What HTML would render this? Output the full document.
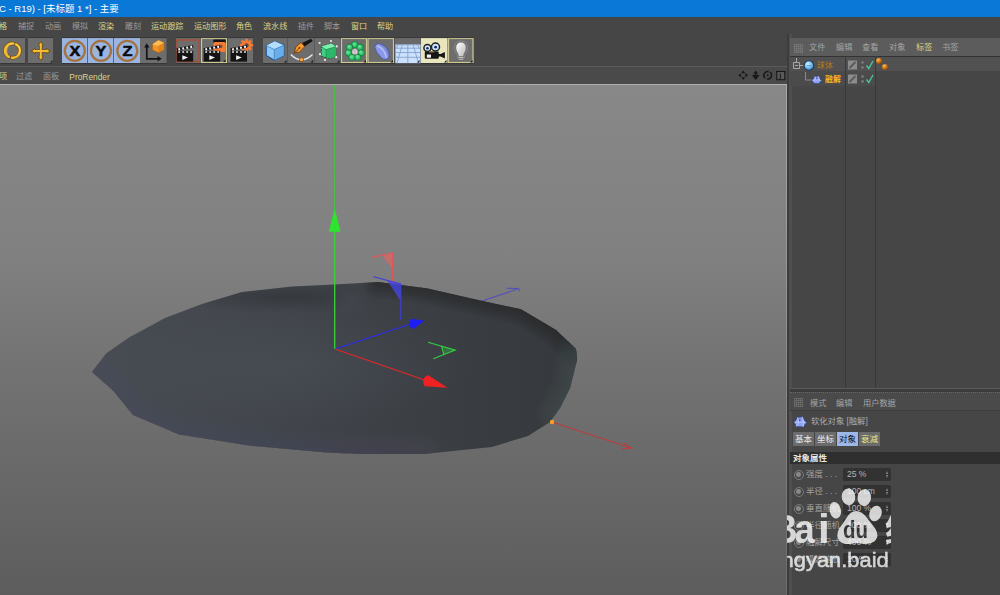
<!DOCTYPE html>
<html lang="zh">
<head>
<meta charset="utf-8">
<title>C4D</title>
<style>
html,body{margin:0;padding:0;}
body{width:1000px;height:595px;overflow:hidden;background:#464646;position:relative;font-family:"Liberation Sans","Noto Sans CJK SC",sans-serif;}
.abs{position:absolute;}
.t{position:absolute;white-space:nowrap;line-height:1;}
#title{left:0;top:0;width:1000px;height:17px;background:#0a78d6;}
#title .t{left:-1px;top:4px;font-size:9.5px;color:#fff;}
.m{font-size:8.1px;top:22.9px;color:#9a9a9a;}
.btn{position:absolute;top:38px;height:25px;background:#6c6c6c;}
.bb{background:#9bb5e2;}
.by{box-shadow:inset 0 0 0 1px #c9c58a;}
#vp{left:0;top:84px;width:787px;height:511px;overflow:hidden;border-top:1px solid #b0b0b0;box-sizing:border-box;}
.vm{font-size:8.1px;top:73.4px;color:#9a9a9a;}

.om{font-size:8.2px;top:44.2px;color:#a4a4a4;}
.am{font-size:8.2px;top:399.5px;color:#a4a4a4;}
.tab{position:absolute;top:432px;height:14px;background:#6b6b6b;font-size:8.5px;color:#ececec;text-align:center;line-height:14px;}
.lbl{font-size:8.5px;color:#a2a2a2;left:806px;}
.inp{position:absolute;left:843px;width:48px;height:12.6px;background:#323232;border-radius:1.5px;}
.inp span{position:absolute;left:4px;top:2.3px;font-size:8.5px;color:#b4b4b4;line-height:1;white-space:nowrap;}
.inp i{position:absolute;left:43.3px;top:2.8px;width:0;height:0;border-left:1.7px solid transparent;border-right:1.7px solid transparent;border-bottom:3px solid #8c8c8c;}
.inp i:after{content:"";position:absolute;left:-1.7px;top:3.6px;width:0;height:0;border-left:1.7px solid transparent;border-right:1.7px solid transparent;border-top:3px solid #8c8c8c;}
.radio{position:absolute;left:793.5px;width:10px;height:10px;border-radius:50%;border:1px solid #7c7c7c;box-sizing:border-box;}
.radio:after{content:"";position:absolute;left:1.7px;top:1.7px;width:4.6px;height:4.6px;border-radius:50%;background:#888;}
.y{color:#d8d48a;}
</style>
</head>
<body>
<!-- title bar -->
<div id="title" class="abs"><span class="t">C - R19) - [未标题 1 *] - 主要</span></div>

<!-- main menu -->
<span class="t m y" style="left:-1px">格</span>
<span class="t m" style="left:18px">捕捉</span>
<span class="t m" style="left:45px">动画</span>
<span class="t m" style="left:72px">模拟</span>
<span class="t m y" style="left:98px">渲染</span>
<span class="t m" style="left:125px">雕刻</span>
<span class="t m y" style="left:151px">运动跟踪</span>
<span class="t m y" style="left:194px">运动图形</span>
<span class="t m y" style="left:236px">角色</span>
<span class="t m y" style="left:263px">流水线</span>
<span class="t m" style="left:298px">插件</span>
<span class="t m" style="left:324px">脚本</span>
<span class="t m y" style="left:351px">窗口</span>
<span class="t m y" style="left:377px">帮助</span>

<!-- toolbar -->
<div id="toolbar">
<svg class="abs" style="left:0;top:34.400px" width="480" height="32" viewBox="0 34 480 32">
<defs>
<linearGradient id="cubeT" x1="0" y1="0" x2="0" y2="1"><stop offset="0" stop-color="#a8dcff"/><stop offset="1" stop-color="#7cc0f4"/></linearGradient>
<linearGradient id="bulb" x1="0" y1="0" x2="1" y2="1"><stop offset="0" stop-color="#ffffff"/><stop offset="1" stop-color="#b8b8b8"/></linearGradient>
</defs>
<!-- button backgrounds -->
<g fill="#6d6d6d">
<rect x="0" y="38" width="25" height="25"/><rect x="28" y="38" width="25" height="25"/>
<rect x="140" y="38" width="26.5" height="25"/>
<rect x="176" y="38" width="24.5" height="25"/><rect x="201" y="38" width="26" height="25"/><rect x="228" y="38" width="25" height="25"/>
<rect x="263" y="38" width="24.5" height="25"/><rect x="288" y="38" width="26" height="25"/><rect x="314.5" y="38" width="26" height="25"/>
<rect x="341" y="38" width="26" height="25"/><rect x="367.5" y="38" width="26.5" height="25"/><rect x="395" y="38" width="25.5" height="25"/>
<rect x="448" y="38" width="25.5" height="25"/>
</g>
<g fill="#9bb5e3"><rect x="62" y="38" width="25.3" height="25"/><rect x="88" y="38" width="25.3" height="25"/><rect x="114" y="38" width="26" height="25"/></g>
<rect x="421" y="38" width="26.5" height="25" fill="#e9e6bd"/>
<g fill="none" stroke="#ccc890" stroke-width="1.200"><rect x="201.5" y="38.5" width="25" height="24"/><rect x="341.5" y="38.5" width="25" height="24"/><rect x="368" y="38.5" width="25.5" height="24"/><rect x="448.5" y="38.5" width="24.5" height="24"/></g>

<path d="M0 37.600H25M0 63.500H25" stroke="#363636" stroke-width="0.900" fill="none"/><path d="M28 37.600H53M28 63.500H53" stroke="#363636" stroke-width="0.900" fill="none"/><path d="M62 37.600H166.5M62 63.500H166.5" stroke="#363636" stroke-width="0.900" fill="none"/><path d="M176 37.600H253M176 63.500H253" stroke="#363636" stroke-width="0.900" fill="none"/><path d="M263 37.600H473.5M263 63.500H473.5" stroke="#363636" stroke-width="0.900" fill="none"/>
<!-- 1 rotate -->
<g fill="none" stroke="#6a4a10" stroke-width="3.700" stroke-linecap="round"><path d="M13.200 43.500 A7.100 7.100 0 0 0 8.800 56.800"/><path d="M16 44.300 A7.100 7.100 0 0 1 12 57.700"/></g>
<g fill="none" stroke="#f6bc2e" stroke-width="2.500" stroke-linecap="round"><path d="M13.200 43.500 A7.100 7.100 0 0 0 8.800 56.800"/><path d="M16 44.300 A7.100 7.100 0 0 1 12 57.700"/></g>
<g fill="none" stroke="#ffdc70" stroke-width="0.800" stroke-linecap="round"><path d="M12.600 43.300 A7.400 7.400 0 0 0 7.300 54"/><path d="M16.600 44.300 A7.400 7.400 0 0 1 19 54"/></g>
<!-- 2 move -->
<g fill="#6a4a10" stroke="#6a4a10" stroke-width="1.200" stroke-linejoin="round"><path d="M40.800 42l2.200 3.200h-1.200v4.800h4.800v-1.200l3.200 2.200-3.200 2.200v-1.200h-4.800v4.800h1.200l-2.200 3.200-2.200-3.200h1.200v-4.800h-4.800v1.200l-3.200-2.200 3.200-2.200v1.200h4.800v-4.800h-1.200z"/></g>
<path d="M40.800 42.300l1.900 2.900h-0.900v4.800h4.800v-0.900l2.900 1.900-2.900 1.900v-0.900h-4.800v4.800h0.900l-1.900 2.900-1.900-2.900h0.900v-4.800h-4.800v0.900l-2.900-1.900 2.900-1.900v0.900h4.800v-4.800h-0.900z" fill="#f6bc2e"/>
<!-- XYZ -->
<g fill="none" stroke="#a4733f" stroke-width="2.300"><circle cx="74.800" cy="50.800" r="10"/><circle cx="101" cy="50.800" r="10"/><circle cx="127.300" cy="50.800" r="10"/></g>
<g font-family="Liberation Sans, sans-serif" font-weight="bold" font-size="14" fill="#0c0c0c" stroke="#0c0c0c" stroke-width="0.500" text-anchor="middle"><text x="74.800" y="55.800" textLength="10.800" lengthAdjust="spacingAndGlyphs">X</text><text x="101" y="55.800" textLength="10.800" lengthAdjust="spacingAndGlyphs">Y</text><text x="127.400" y="55.800" textLength="10" lengthAdjust="spacingAndGlyphs">Z</text></g>
<!-- coord -->
<path d="M146.800 46v12.800h11.500" fill="none" stroke="#151515" stroke-width="1.700"/><path d="M146.800 43.300l-2.700 4.200h5.400zM161.800 58.800l-4.200-2.700v5.400z" fill="#151515"/>
<path d="M152.300 44.200l6.200-3.900 5.500 2.400v7l-5.700 3-6-2.700z" fill="#f49428" stroke="#a85c0c" stroke-width="0.800" stroke-linejoin="round"/><path d="M152.300 44.200l6.200-3.900 5.500 2.400-5.700 3.200z" fill="#ffbc58"/><path d="M158.300 45.900v6.800l5.700-3v-7z" fill="#e08418"/>
<!-- clapper 1 -->
<rect x="177" y="40" width="22" height="21.500" fill="none" stroke="#b04c2e" stroke-width="1.300"/>
<g id="clap"><rect x="176.700" y="52.600" width="16.500" height="9" fill="#141414"/><rect x="176.700" y="50.800" width="16.500" height="2" fill="#141414"/>
<path d="M176.500 48.300l16.300-3.300 .6 2.700-16.300 3.300z" fill="#141414"/>
<path d="M178 48.400l1.900-.4.500 2.200-1.900.4zM182 47.600l1.900-.4.500 2.200-1.900.4zM186 46.800l1.900-.4.500 2.200-1.900.4zM190 46l1.900-.4.500 2.200-1.900.4z" fill="#f2f2f2"/>
<path d="M178.300 51.200h1.800v1.600h-1.800zM182.300 51.200h1.800v1.600h-1.800zM186.300 51.200h1.800v1.600h-1.800zM190.300 51.200h1.800v1.600h-1.800z" fill="#f2f2f2"/>
<path d="M182.300 55.300l5.700 2.300-5.700 2.300z" fill="#f2f2f2"/></g>
<!-- clapper 2 -->
<rect x="213.300" y="39.600" width="12.400" height="4" rx="1" fill="#141414"/>
<rect x="213.300" y="42" width="12.400" height="10" rx="1.500" fill="#f47a36"/>
<rect x="218.400" y="44.700" width="4" height="3.200" rx="0.800" fill="#8a5038"/>
<use href="#clap" x="27"/>
<path d="M225.500 59.500v2.500h-2.500z" fill="#1a1a1a"/>
<!-- clapper 3 -->
<g fill="#f47a36"><circle cx="246.500" cy="45.300" r="4.900"/><path d="M245.200 38.700h2.600v13.200h-2.600zM239.900 44h13.200v2.600h-13.200z"/><path d="M245.200 38.700h2.600v13.200h-2.600zM239.900 44h13.200v2.600h-13.200z" transform="rotate(45 246.500 45.300)"/></g>
<circle cx="246.500" cy="45.300" r="2.100" fill="#5a4a44"/>
<use href="#clap" x="53.800"/>
<!-- cube -->
<path d="M274.800 41.300L283.800 45.200V55.500L274.300 60.200L266.200 55.500V45.600z" fill="#8cc8f8" stroke="#275a96" stroke-width="1.300" stroke-linejoin="round"/>
<path d="M274.800 41.300L283.800 45.200L274.300 49.500L266.200 45.600z" fill="#b4deff"/>
<path d="M274.300 49.500L283.800 45.200V55.500L274.300 60.200z" fill="#68aeea"/>
<path d="M266.200 45.600L274.300 49.500L283.800 45.200M274.300 49.500V60.200" fill="none" stroke="#3a78b8" stroke-width="0.700"/>
<!-- pen -->
<path d="M302 43l9-4.300 1.800 2.200-8.300 5.600z" fill="#141414"/>
<path d="M294.200 53.300l1.600-6.200 5.200-4.700 3.700 4.200-4.900 5.300z" fill="#f49a30" stroke="#6a3808" stroke-width="0.800" stroke-linejoin="round"/>
<path d="M294.600 52.900l4.600-4.700" stroke="#5a2c04" stroke-width="0.900"/><circle cx="299.500" cy="47.800" r="0.900" fill="#5a2c04"/>
<path d="M291.300 55 Q301.400 64.500 312 55" fill="none" stroke="#ececec" stroke-width="1.500" stroke-linecap="round"/>
<circle cx="301.500" cy="59.700" r="2.100" fill="#f8a840" stroke="#7a4008" stroke-width="0.700"/>
<!-- green cube -->
<path d="M321.300 46.500L331.500 43.500L335.800 46.800V56L331 58.600L321.300 56.500z" fill="#3ed080" stroke="#1c5c3a" stroke-width="1" stroke-linejoin="round" stroke-dasharray="2.500 1"/>
<path d="M321.300 46.500L331.500 43.500L335.800 46.800L326 49.600z" fill="#7ef0b0"/>
<path d="M326 49.600L335.800 46.800V56L331 58.600L326 57.500z" fill="#2cb868"/>
<path d="M321.300 46.500L326 49.600L335.800 46.800M326 49.600V57.500" fill="none" stroke="#1c7a48" stroke-width="0.600"/>
<g fill="#ececec"><circle cx="319.600" cy="43" r="1.100"/><circle cx="331" cy="41" r="1.100"/><circle cx="336.800" cy="46.400" r="1.100"/><circle cx="320" cy="54.200" r="1.100"/><circle cx="325" cy="59.900" r="1.100"/><circle cx="336.300" cy="57.200" r="1.100"/></g>
<!-- flower / cloner -->
<g fill="#34c46c" stroke="#167a40" stroke-width="0.900"><circle cx="354.8" cy="44.7" r="3.200"/><circle cx="360.0" cy="47.2" r="3.200"/><circle cx="361.2" cy="52.8" r="3.200"/><circle cx="357.7" cy="57.2" r="3.200"/><circle cx="351.9" cy="57.2" r="3.200"/><circle cx="348.4" cy="52.8" r="3.200"/><circle cx="349.6" cy="47.2" r="3.200"/></g>
<g fill="#5ae090"><circle cx="354.3" cy="44.1" r="1.600"/><circle cx="359.5" cy="46.6" r="1.600"/><circle cx="360.7" cy="52.2" r="1.600"/><circle cx="357.2" cy="56.6" r="1.600"/><circle cx="351.4" cy="56.6" r="1.600"/><circle cx="347.9" cy="52.2" r="1.600"/><circle cx="349.1" cy="46.6" r="1.600"/></g>
<path d="M352 49.800l3-1.300 2.800 1.300v3.600l-2.800 1.500-3-1.500z" fill="#dcd4d4" stroke="#7a7070" stroke-width="0.500"/><path d="M352 49.800l3 1.300 2.800-1.300M355 51.100v3.800" stroke="#9a9090" stroke-width="0.500" fill="none"/>
<!-- capsule -->
<path d="M374.800 47.500 Q375.500 42.500 380.500 43.800 Q388.500 47 389.300 55.500 Q388.500 60.500 383.500 59.200 Q380.500 58 379.300 55.300 Q376.500 53.500 374.800 47.500z" fill="#8a98e8" stroke="#4656a0" stroke-width="0.900"/>
<path d="M377 45.800 Q384.500 48.500 386.300 57.500" fill="none" stroke="#b4c0fc" stroke-width="1.500"/>
<path d="M379.800 44.500 Q387 48 388.300 56" fill="none" stroke="#6a78c8" stroke-width="0.700"/>
<!-- floor -->
<path d="M395.500 38.400h25v6h-25z" fill="#696969"/>
<path d="M395.500 44.400h25v18.800h-25z" fill="#cbe0fc"/>
<g stroke="#7c9acc" stroke-width="0.800" fill="none"><path d="M395.500 44.800h25M395.500 48.200h25M395.500 52.500h25M395.500 57.300h25M407.800 44.400v18.800M402.500 44.400l-5.500 18.800M413 44.400l5.500 18.800M398.500 44.400l-3 5M417 44.400l3.500 5"/></g>
<!-- camera -->
<circle cx="427.400" cy="48" r="3.500" fill="#d4e6ff" stroke="#1c2420" stroke-width="1.500"/><circle cx="435.500" cy="47" r="4" fill="#d4e6ff" stroke="#1c2420" stroke-width="1.500"/>
<circle cx="427.400" cy="48.200" r="1.300" fill="#142c6c"/><circle cx="435.600" cy="47.200" r="1.400" fill="#142c6c"/>
<rect x="424.800" y="51.600" width="14" height="7.200" rx="1.200" fill="#161616"/><path d="M438 54h2.500l4.400-2v6.500l-4.400-2h-2.500z" fill="#161616"/>
<rect x="426.800" y="54.500" width="4.200" height="3.200" fill="#f2f2f2"/><rect x="429" y="51.100" width="5" height="1.500" rx="0.700" fill="#9a7050"/>
<!-- light -->
<path d="M461 41 Q467.500 41 467.500 48 Q467.500 51.500 464.500 55.500v2.500h-7v-2.500 Q454.500 51.500 454.500 48 Q454.500 41 461 41z" fill="none" stroke="#8c8c8c" stroke-width="0.800"/>
<path d="M461 42.500 Q465.800 42.500 465.800 48 Q465.800 51 463.400 54.500v1.800h-4.800v-1.800 Q456.200 51 456.200 48 Q456.200 42.500 461 42.500z" fill="url(#bulb)"/>
<path d="M458.500 57.500h5M458.700 59.300h4.600" stroke="#bcbcbc" stroke-width="1.100"/>
<!-- corner triangles -->
<g fill="#1a1a1a"><path d="M52.5 60v2.5h-2.5z"/><path d="M286.5 60v2.5h-2.5z"/><path d="M313 60v2.5h-2.5z"/><path d="M339.5 60v2.5h-2.5z"/><path d="M366 60v2.5h-2.5z"/><path d="M393 60v2.5h-2.5z"/><path d="M419.5 60v2.5h-2.5z"/><path d="M446.5 60v2.5h-2.5z"/><path d="M472.5 60v2.5h-2.5z"/></g>
</svg>
</div>

<!-- viewport menu -->
<div class="abs" style="left:0;top:67px;width:787px;height:17px;background:#4a4a4a"></div>
<div class="abs" style="left:0;top:66px;width:788px;height:1px;background:#5a5a5a"></div>
<span class="t vm y" style="left:-1px">项</span>
<span class="t vm" style="left:16px">过滤</span>
<span class="t vm" style="left:43px">面板</span>
<span class="t vm y" style="left:69.300px;font-size:8.400px">ProRender</span>

<svg class="abs" style="left:736px;top:69px" width="52" height="13" viewBox="736 69 52 13">
<g fill="#181818" stroke="none">
<path d="M743.200 70.600l2 2.700h-4zM743.200 80l2-2.700h-4zM738.400 75.300l2.700-2v4zM748 75.300l-2.700-2v4z"/>
<path d="M755.700 70.500l2.300 3.200h-1.500v1.300h3.100l-3.900 5-3.900-5h3.100v-1.300h-1.500z"/>
<path d="M776.300 71h9v2.200h-9z"/>
</g>
<circle cx="767.700" cy="75.300" r="3.800" fill="none" stroke="#181818" stroke-width="1.600" stroke-dasharray="9.900 2.040" transform="rotate(-55 767.700 75.300)"/>
<circle cx="767.700" cy="75.300" r="1" fill="#181818"/>
<rect x="776.800" y="71.500" width="8" height="8.200" fill="#5a5a5a" stroke="#181818" stroke-width="1.100"/>
<path d="M780.300 73.500v6" stroke="#181818" stroke-width="1"/>
</svg>
<!-- viewport -->
<div id="vp" class="abs">
<svg width="787" height="511" viewBox="0 84 787 511" style="position:absolute;left:0;top:-1px">
<defs>
<linearGradient id="rb" x1="0" y1="84" x2="0" y2="595" gradientUnits="userSpaceOnUse"><stop offset="0" stop-color="#a8a8a8"/><stop offset="0.400" stop-color="#969696"/><stop offset="1" stop-color="#6c6c6c"/></linearGradient>
<linearGradient id="bg" x1="0" y1="84" x2="0" y2="595" gradientUnits="userSpaceOnUse">
<stop offset="0" stop-color="#888888"/>
<stop offset="0.35" stop-color="#808080"/>
<stop offset="0.55" stop-color="#737373"/>
<stop offset="1" stop-color="#5d5d5d"/>
</linearGradient>
<linearGradient id="obj" x1="92" y1="0" x2="577" y2="0" gradientUnits="userSpaceOnUse">
<stop offset="0" stop-color="#484c53"/><stop offset="0.350" stop-color="#42464c"/><stop offset="0.750" stop-color="#3a3e43"/><stop offset="1" stop-color="#35383c"/>
</linearGradient>
<radialGradient id="objhi" cx="0.500" cy="0.500" r="0.500"><stop offset="0" stop-color="#596069" stop-opacity="0.220"/><stop offset="1" stop-color="#596069" stop-opacity="0"/></radialGradient>
<radialGradient id="objlo" cx="0.500" cy="0.500" r="0.500"><stop offset="0" stop-color="#2c2e32" stop-opacity="0.550"/><stop offset="1" stop-color="#2c2e32" stop-opacity="0"/></radialGradient>
<clipPath id="objc"><polygon points="92,372 106,353.500 129,337.500 165,318 202,304 242,292 292,286.500 334,284.500 378,282 427.600,288.600 480,300.500 521,309.300 556,330 576,349 577,360 570,388 560,408 550,422 528,436 492,447 424,454 360,454 327,452.500 249,445.500 179,434.500 133,415 113,390.500"/></clipPath>
</defs>
<rect x="0" y="84" width="787" height="511" fill="url(#bg)"/>
<rect x="786" y="84" width="1" height="511" fill="url(#rb)"/>
<!-- thin blue line behind -->
<path d="M480.600 301.500 L518.800 288.600 L506.500 288.200 M518.800 288.600 L519.800 291.200" stroke="#4e46c8" stroke-opacity="0.850" stroke-width="1.100" fill="none"/>
<polygon fill="url(#obj)" points="92,372 106,353.5 129,337.5 165,318 202,304 242,292 292,286.5 334,284.5 378,282 427.600,288.600 480,300.500 521,309.300 556,330 576,349 577,360 570,388 560,408 550,422 528,436 492,447 424,454 360,454 327,452.5 249,445.5 179,434.5 133,415 113,390.5"/>
<g clip-path="url(#objc)">
<ellipse cx="300" cy="365" rx="170" ry="62" fill="url(#objhi)"/>
<ellipse cx="285" cy="297" rx="110" ry="16" fill="url(#objlo)"/>
<ellipse cx="350" cy="300" rx="26" ry="14" fill="url(#objhi)"/>
<polyline points="378,282 427.600,288.600 480,300.500 521,309.300 556,330 576,349" fill="none" stroke="#26282c" stroke-opacity="0.077" stroke-width="3" stroke-linejoin="round" stroke-linecap="round"/><polyline points="378,282 427.600,288.600 480,300.500 521,309.300 556,330 576,349" fill="none" stroke="#26282c" stroke-opacity="0.077" stroke-width="6" stroke-linejoin="round" stroke-linecap="round"/><polyline points="378,282 427.600,288.600 480,300.500 521,309.300 556,330 576,349" fill="none" stroke="#26282c" stroke-opacity="0.077" stroke-width="9" stroke-linejoin="round" stroke-linecap="round"/><polyline points="378,282 427.600,288.600 480,300.500 521,309.300 556,330 576,349" fill="none" stroke="#26282c" stroke-opacity="0.077" stroke-width="12" stroke-linejoin="round" stroke-linecap="round"/><polyline points="378,282 427.600,288.600 480,300.500 521,309.300 556,330 576,349" fill="none" stroke="#26282c" stroke-opacity="0.077" stroke-width="15" stroke-linejoin="round" stroke-linecap="round"/><polyline points="378,282 427.600,288.600 480,300.500 521,309.300 556,330 576,349" fill="none" stroke="#26282c" stroke-opacity="0.077" stroke-width="18" stroke-linejoin="round" stroke-linecap="round"/><polyline points="378,282 427.600,288.600 480,300.500 521,309.300 556,330 576,349" fill="none" stroke="#26282c" stroke-opacity="0.077" stroke-width="21" stroke-linejoin="round" stroke-linecap="round"/><polyline points="378,282 427.600,288.600 480,300.500 521,309.300 556,330 576,349" fill="none" stroke="#26282c" stroke-opacity="0.077" stroke-width="24" stroke-linejoin="round" stroke-linecap="round"/><polyline points="378,282 427.600,288.600 480,300.500 521,309.300 556,330 576,349" fill="none" stroke="#26282c" stroke-opacity="0.077" stroke-width="28" stroke-linejoin="round" stroke-linecap="round"/><polyline points="378,282 427.600,288.600 480,300.500 521,309.300 556,330 576,349" fill="none" stroke="#26282c" stroke-opacity="0.077" stroke-width="32" stroke-linejoin="round" stroke-linecap="round"/>
<polyline points="577,352 570,388 556,414" fill="none" stroke="#565b63" stroke-opacity="0.050" stroke-width="6" stroke-linejoin="round" stroke-linecap="round"/><polyline points="577,352 570,388 556,414" fill="none" stroke="#565b63" stroke-opacity="0.050" stroke-width="10" stroke-linejoin="round" stroke-linecap="round"/><polyline points="577,352 570,388 556,414" fill="none" stroke="#565b63" stroke-opacity="0.050" stroke-width="14" stroke-linejoin="round" stroke-linecap="round"/><polyline points="577,352 570,388 556,414" fill="none" stroke="#565b63" stroke-opacity="0.050" stroke-width="18" stroke-linejoin="round" stroke-linecap="round"/><polyline points="577,352 570,388 556,414" fill="none" stroke="#565b63" stroke-opacity="0.050" stroke-width="22" stroke-linejoin="round" stroke-linecap="round"/><polyline points="577,352 570,388 556,414" fill="none" stroke="#565b63" stroke-opacity="0.050" stroke-width="26" stroke-linejoin="round" stroke-linecap="round"/><polyline points="577,352 570,388 556,414" fill="none" stroke="#565b63" stroke-opacity="0.050" stroke-width="30" stroke-linejoin="round" stroke-linecap="round"/><polyline points="577,352 570,388 556,414" fill="none" stroke="#565b63" stroke-opacity="0.050" stroke-width="34" stroke-linejoin="round" stroke-linecap="round"/><polyline points="577,352 570,388 556,414" fill="none" stroke="#565b63" stroke-opacity="0.050" stroke-width="38" stroke-linejoin="round" stroke-linecap="round"/><polyline points="577,352 570,388 556,414" fill="none" stroke="#565b63" stroke-opacity="0.050" stroke-width="42" stroke-linejoin="round" stroke-linecap="round"/>
<polyline points="92,372 113,390.500 133,415 179,434.500 249,445.500 327,452.500 424,454" fill="none" stroke="#545961" stroke-opacity="0.047" stroke-width="5" stroke-linejoin="round" stroke-linecap="round"/><polyline points="92,372 113,390.500 133,415 179,434.500 249,445.500 327,452.500 424,454" fill="none" stroke="#545961" stroke-opacity="0.047" stroke-width="10" stroke-linejoin="round" stroke-linecap="round"/><polyline points="92,372 113,390.500 133,415 179,434.500 249,445.500 327,452.500 424,454" fill="none" stroke="#545961" stroke-opacity="0.047" stroke-width="15" stroke-linejoin="round" stroke-linecap="round"/><polyline points="92,372 113,390.500 133,415 179,434.500 249,445.500 327,452.500 424,454" fill="none" stroke="#545961" stroke-opacity="0.047" stroke-width="20" stroke-linejoin="round" stroke-linecap="round"/><polyline points="92,372 113,390.500 133,415 179,434.500 249,445.500 327,452.500 424,454" fill="none" stroke="#545961" stroke-opacity="0.047" stroke-width="25" stroke-linejoin="round" stroke-linecap="round"/><polyline points="92,372 113,390.500 133,415 179,434.500 249,445.500 327,452.500 424,454" fill="none" stroke="#545961" stroke-opacity="0.047" stroke-width="30" stroke-linejoin="round" stroke-linecap="round"/><polyline points="92,372 113,390.500 133,415 179,434.500 249,445.500 327,452.500 424,454" fill="none" stroke="#545961" stroke-opacity="0.047" stroke-width="35" stroke-linejoin="round" stroke-linecap="round"/><polyline points="92,372 113,390.500 133,415 179,434.500 249,445.500 327,452.500 424,454" fill="none" stroke="#545961" stroke-opacity="0.047" stroke-width="40" stroke-linejoin="round" stroke-linecap="round"/>
</g>
<!-- green axis -->
<line x1="334.600" y1="84" x2="334.600" y2="210" stroke="#48c048" stroke-width="1"/>
<line x1="334.700" y1="230" x2="334.700" y2="349" stroke="#38d438" stroke-width="1.300"/>
<polygon points="334.700,208.600 328.800,231.800 340.600,231.800" fill="#2ee42e"/>
<!-- blue axis -->
<line x1="335" y1="349" x2="412" y2="323.5" stroke="#2a2af0" stroke-width="1.2"/>
<path d="M424.300 320.700 L411.500 318.800 Q408.500 321 409.200 325 Q410.500 328.500 413.600 329z" fill="#1e1ef4"/>
<!-- red axis -->
<line x1="335" y1="349" x2="426" y2="380.5" stroke="#e02828" stroke-width="1.2"/>
<path d="M447.500 387.700 L428 375 Q424 376.500 423.300 380.500 Q423 384.500 424.800 386.300z" fill="#ee2222"/>
<!-- red flag -->
<path d="M371.300 257.400 L392.500 253 L392.500 284" stroke="#de5656" stroke-width="1.100" fill="none"/>
<polygon points="382,255.200 392.500,253 392.200,268.500" fill="#e06464" fill-opacity="0.700"/>
<!-- blue flag -->
<path d="M373.600 276.800 L400.800 284 L400.800 319.500" stroke="#3c3ce0" stroke-width="1.100" fill="none"/>
<polygon points="387,280.300 400.800,284 400.500,301" fill="#4646e0" fill-opacity="0.800"/>
<!-- green A -->
<polygon points="441.800,346.500 455,350.100 443.800,354.500" fill="#30c840" fill-opacity="0.350"/>
<path d="M428 342.200 L455.200 350.100 L433.300 358.700 M441.600 346.300 L443.900 354.600" stroke="#34cc44" stroke-width="1.100" fill="none"/>
<!-- falloff handle -->
<line x1="552" y1="422" x2="631" y2="448" stroke="#d03030" stroke-width="0.9"/>
<path d="M623 442.5 L631 448 L622 449" stroke="#d03030" stroke-width="0.9" fill="none"/>
<circle cx="552" cy="422" r="2.2" fill="#ffa020"/>
</svg>
</div>


<!-- right panel: object manager -->
<div class="abs" style="left:787px;top:34px;width:2px;height:561px;background:#3c3c3c"></div>
<div class="abs" style="left:789px;top:34px;width:3px;height:561px;background:#4f4f4f"></div>
<div class="abs" style="left:790px;top:38px;width:210px;height:18px;background:#5c5c5c"></div>
<div class="abs" style="left:790px;top:56px;width:210px;height:1px;background:#333"></div>
<svg class="abs" style="left:794px;top:43.500px" width="9" height="9" viewBox="0 0 9 9"><path d="M0.5 0v9M2.5 0v9M4.5 0v9M6.5 0v9M8.5 0v9M0 0.5h9M0 2.5h9M0 4.5h9M0 6.5h9M0 8.5h9" stroke="#7c7c7c" stroke-width="0.6" fill="none"/></svg>
<span class="t om" style="left:809px">文件</span>
<span class="t om" style="left:836px">编辑</span>
<span class="t om" style="left:862px">查看</span>
<span class="t om" style="left:889px">对象</span>
<span class="t om y" style="left:916px">标签</span>
<span class="t om" style="left:942px">书签</span>
<!-- rows -->
<div class="abs" style="left:790px;top:57px;width:210px;height:14px;background:#515151"></div>
<div class="abs" style="left:790px;top:71px;width:85px;height:15px;background:#4b4b4b"></div>
<div class="abs" style="left:845px;top:56px;width:1px;height:333px;background:#383838"></div>
<div class="abs" style="left:875px;top:56px;width:1px;height:333px;background:#383838"></div>
<div class="abs" style="left:790px;top:388px;width:210px;height:1px;background:#5a5a5a"></div>
<div class="abs" style="left:790px;top:389px;width:210px;height:3px;background:#3c3c3c"></div>
<!-- tree -->
<svg class="abs" style="left:790px;top:56px" width="100" height="31" viewBox="790 56 100 31">
<defs>
<radialGradient id="sph" cx="0.4" cy="0.35" r="0.7"><stop offset="0" stop-color="#d8f0ff"/><stop offset="0.6" stop-color="#6cb8ec"/><stop offset="1" stop-color="#3a7cc0"/></radialGradient>
<radialGradient id="ball" cx="0.35" cy="0.3" r="0.8"><stop offset="0" stop-color="#ffc060"/><stop offset="0.5" stop-color="#d07818"/><stop offset="1" stop-color="#7a4008"/></radialGradient>
</defs>
<path d="M796.5 58v4M793.5 62.5h6v6h-6zM795 65.5h3M800 65.5h3" stroke="#a8a8a8" stroke-width="1" fill="none"/>
<path d="M805.5 72v8h6" stroke="#8a8a8a" stroke-width="1" fill="none"/>
<circle cx="808.900" cy="65.500" r="4.800" fill="url(#sph)" stroke="#1e3e60" stroke-width="1.100"/>
<path d="M807 65.5h4" stroke="#4a90d0" stroke-width="0.8"/>
<path d="M814.800 76.300L818.600 76L821.300 80.600L819 83.800L813.700 83.600L812.100 80.300z" fill="#8ea2f2" stroke="#34407c" stroke-width="0.900" stroke-linejoin="round"/><path d="M814.800 76.300L815.600 80L812.100 80.300M815.600 80L819.200 79.900L818.600 76M819.200 79.900L821.300 80.600" fill="none" stroke="#c4d0ff" stroke-width="0.600"/><path d="M816.800 77.500v1.800" stroke="#2a3a9a" stroke-width="0.800"/>
<!-- col 2 -->
<rect x="848" y="60.5" width="9" height="9" fill="#8c8c8c"/><path d="M849.5 68 L855.5 62" stroke="#5a5a5a" stroke-width="2"/>
<rect x="848" y="74.5" width="9" height="9" fill="#8c8c8c"/><path d="M849.5 82 L855.5 76" stroke="#5a5a5a" stroke-width="2"/>
<circle cx="862.5" cy="62.5" r="1.4" fill="#767676"/><circle cx="862.5" cy="67.5" r="1.4" fill="#767676"/>
<circle cx="862.5" cy="76.5" r="1.4" fill="#767676"/><circle cx="862.5" cy="81.5" r="1.4" fill="#767676"/>
<path d="M866.5 65.5 L868.8 68.5 L873 61" stroke="#48c8a0" stroke-width="1.4" fill="none"/>
<path d="M866.5 79.5 L868.8 82.5 L873 75" stroke="#48c8a0" stroke-width="1.4" fill="none"/>
<circle cx="879" cy="61" r="3" fill="url(#ball)"/><circle cx="885" cy="67" r="3" fill="url(#ball)"/>
</svg>
<span class="t" style="left:817px;top:62px;font-size:7.900px;color:#b47c22">球体</span>
<span class="t" style="left:825px;top:76.300px;font-size:7.900px;color:#ffb81e;font-weight:bold">融解</span>

<!-- attribute manager -->
<div class="abs" style="left:790px;top:392px;width:210px;height:18px;background:#4a4a4a;border-top:1px dotted #666;box-sizing:border-box"></div>
<div class="abs" style="left:790px;top:410px;width:210px;height:1px;background:#3e3e3e"></div>
<svg class="abs" style="left:794px;top:398px" width="9" height="9" viewBox="0 0 9 9"><path d="M0.5 0v9M2.5 0v9M4.5 0v9M6.5 0v9M8.5 0v9M0 0.5h9M0 2.5h9M0 4.5h9M0 6.5h9M0 8.5h9" stroke="#747474" stroke-width="0.6" fill="none"/></svg>
<span class="t am" style="left:810px">模式</span>
<span class="t am" style="left:836px">编辑</span>
<span class="t am" style="left:863px">用户数据</span>
<svg class="abs" style="left:793px;top:415px" width="15" height="14" viewBox="793 415 15 14"><path d="M797.500 417.300L802.500 416.800L806.300 422.800L803.300 427L796.300 426.700L794.200 422.300z" fill="#8ea2f2" stroke="#34407c" stroke-width="0.900" stroke-linejoin="round"/><path d="M797.500 417.300L798.500 422.200L794.200 422.300M798.500 422.200L803.300 422L802.500 416.800M803.300 422L806.300 422.800M798.500 422.200L796.300 426.700M803.300 422L803.300 427" fill="none" stroke="#c4d0ff" stroke-width="0.700"/><path d="M799.800 418.800v2.400" stroke="#2a3a9a" stroke-width="0.900"/></svg>
<span class="t" style="left:811px;top:417.200px;font-size:8.300px;color:#acacac">软化对象 [融解]</span>
<div class="tab" style="left:793px;width:21px">基本</div>
<div class="tab" style="left:815px;width:21px">坐标</div>
<div class="tab" style="left:837px;width:21px;background:#9bb8e8;color:#101010">对象</div>
<div class="tab" style="left:859px;width:21px;color:#e8e484">衰减</div>
<div class="abs" style="left:790px;top:452px;width:210px;height:12px;background:#2f2f2f"></div>
<span class="t" style="left:793px;top:454px;font-size:8.5px;color:#e8e8e8;font-weight:bold">对象属性</span>

<div class="radio" style="top:469.5px"></div><span class="t lbl" style="top:470.3px">强度 . . .</span><div class="inp" style="top:468.2px"><span>25 %</span><i></i></div>
<div class="radio" style="top:486.5px"></div><span class="t lbl" style="top:487.3px">半径 . . .</span><div class="inp" style="top:485.2px"><span>100 cm</span><i></i></div>
<div class="radio" style="top:503.5px"></div><span class="t lbl" style="top:504.3px">垂直随机</span><div class="inp" style="top:502.2px"><span>100 %</span><i></i></div>
<div class="radio" style="top:520.5px"></div><span class="t lbl" style="top:521.3px">半径随机</span><div class="inp" style="top:519.2px"><span>100 %</span><i></i></div>
<div class="radio" style="top:537.5px"></div><span class="t lbl" style="top:538.3px">融解尺寸</span><div class="inp" style="top:536.2px"><span>400 %</span><i></i></div>
<div class="radio" style="top:554.5px"></div><span class="t lbl" style="top:555.3px">噪波缩放</span><div class="inp" style="top:553.2px"><span>10 %</span><i></i></div>
<div class="abs" style="left:891px;top:464px;width:109px;height:131px;background:#464646"></div>

<!-- watermark -->
<div class="abs" style="left:787px;top:480px;width:104px;height:100px;overflow:hidden">
<svg width="104" height="100" viewBox="787 480 104 100" style="position:absolute;left:0;top:0">
<defs>
<clipPath id="jc"><rect x="780" y="545" width="108.500" height="35"/></clipPath>
<mask id="pawm"><rect x="780" y="480" width="120" height="100" fill="#fff"/><text x="843" y="538.300" font-family="Liberation Sans, sans-serif" font-weight="bold" font-size="24" fill="#000" textLength="25" lengthAdjust="spacingAndGlyphs">du</text></mask>
</defs>
<g fill="#ffffff" opacity="0.780">
<g font-family="Liberation Sans, sans-serif" font-weight="bold" font-size="40">
<text x="770.800" y="543" textLength="27" lengthAdjust="spacingAndGlyphs">B</text>
<text x="794.600" y="543" textLength="20.200" lengthAdjust="spacingAndGlyphs">a</text>
<text x="818" y="543" textLength="11.800" lengthAdjust="spacingAndGlyphs">i</text>
</g>
<g mask="url(#pawm)">
<ellipse cx="835.300" cy="510.300" rx="5.600" ry="8.400" transform="rotate(-12 835.300 510.300)"/>
<ellipse cx="848.500" cy="496.800" rx="6.800" ry="8.400" transform="rotate(-4 848.500 496.800)"/>
<ellipse cx="864.300" cy="497.600" rx="6.800" ry="8.400" transform="rotate(6 864.300 497.600)"/>
<ellipse cx="875.500" cy="513.500" rx="6" ry="8" transform="rotate(20 875.500 513.500)"/>
<path d="M856 511 Q862 511 867 518 Q872 524 875.500 529 Q879.500 536 875 541 Q869 545.500 861 543.500 Q857 542.500 852 543.500 Q844 545.500 839.500 541 Q835.500 536 839 529 Q842.500 524 846.500 518 Q850.500 511 856 511z"/>
</g>
<text x="885" y="543" font-family="Liberation Sans, Noto Sans CJK SC, sans-serif" font-weight="bold" font-size="36">经验</text>
<text clip-path="url(#jc)" x="771.900" y="567.300" font-family="Liberation Sans, sans-serif" font-size="20.500" stroke="#fff" stroke-width="0.500" textLength="176.500" lengthAdjust="spacingAndGlyphs">jingyan.baidu.com</text>
</g>
</svg>
</div>
</body>
</html>
